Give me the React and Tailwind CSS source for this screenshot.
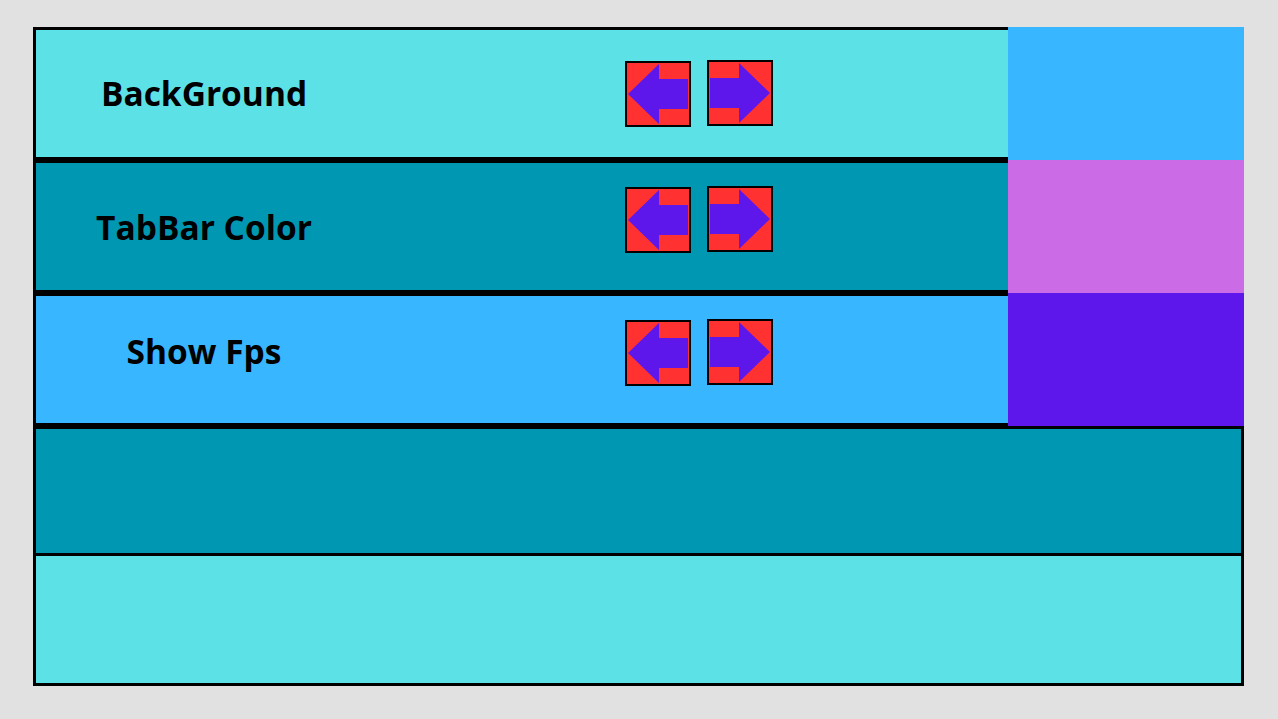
import React from 'react';

const rows = [
  {
    label: 'BackGround',
    rowBg: 'bg-[#5ce1e6]',
    swatch: 'bg-[#38b6ff]',
    labelPad: 'pb-0',
    btnPad: 'pb-0',
  },
  {
    label: 'TabBar Color',
    rowBg: 'bg-[#0097b2]',
    swatch: 'bg-[#cb6ce6]',
    labelPad: 'pt-[2px]',
    btnPad: 'pb-[14px]',
  },
  {
    label: 'Show Fps',
    rowBg: 'bg-[#38b6ff]',
    swatch: 'bg-[#5e17eb]',
    labelPad: 'pb-[15px]',
    btnPad: 'pb-[14px]',
  },
];

const ArrowButton = ({ dir, className = '' }) => (
  <button
    className={`w-[66px] h-[66px] border-2 border-black bg-[#ff3131] p-0 ${className}`}
    aria-label={dir === 'left' ? 'previous' : 'next'}
  >
    <svg viewBox="0 0 62 62" className="w-full h-full block">
      {dir === 'left' ? (
        <polygon
          points="1,31 32,1 32,16 61,16 61,46 32,46 32,61"
          fill="#5e17eb"
        />
      ) : (
        <polygon
          points="61,31 30,1 30,16 1,16 1,46 30,46 30,61"
          fill="#5e17eb"
        />
      )}
    </svg>
  </button>
);

export default function App() {
  return (
    <div
      className="w-[1278px] h-[719px] bg-[#e1e1e1] pl-[33px] pt-[27px]"
      style={{ fontFamily: '"Open Sans", "Liberation Sans", sans-serif' }}
    >
      <div className="w-[1211px]">
        {/* settings rows */}
        {rows.map((row) => (
          <div key={row.label} className="flex h-[133px]">
            <div
              className={`w-[975px] h-full border-[3px] border-r-0 border-black ${row.rowBg} flex items-center`}
            >
              <div
                className={`w-[336px] text-center text-[33.5px] font-bold text-black leading-none ${row.labelPad}`}
              >
                {row.label}
              </div>
              <div className={`ml-[253px] flex items-center gap-4 ${row.btnPad}`}>
                <ArrowButton dir="left" />
                <ArrowButton dir="right" className="mb-[2px]" />
              </div>
            </div>
            <div className={`w-[236px] h-full ${row.swatch}`} />
          </div>
        ))}

        {/* empty lower panels */}
        <div className="border-[3px] border-black">
          <div className="h-[127px] bg-[#0097b2] border-b-[3px] border-black" />
          <div className="h-[127px] bg-[#5ce1e6]" />
        </div>
      </div>
    </div>
  );
}
